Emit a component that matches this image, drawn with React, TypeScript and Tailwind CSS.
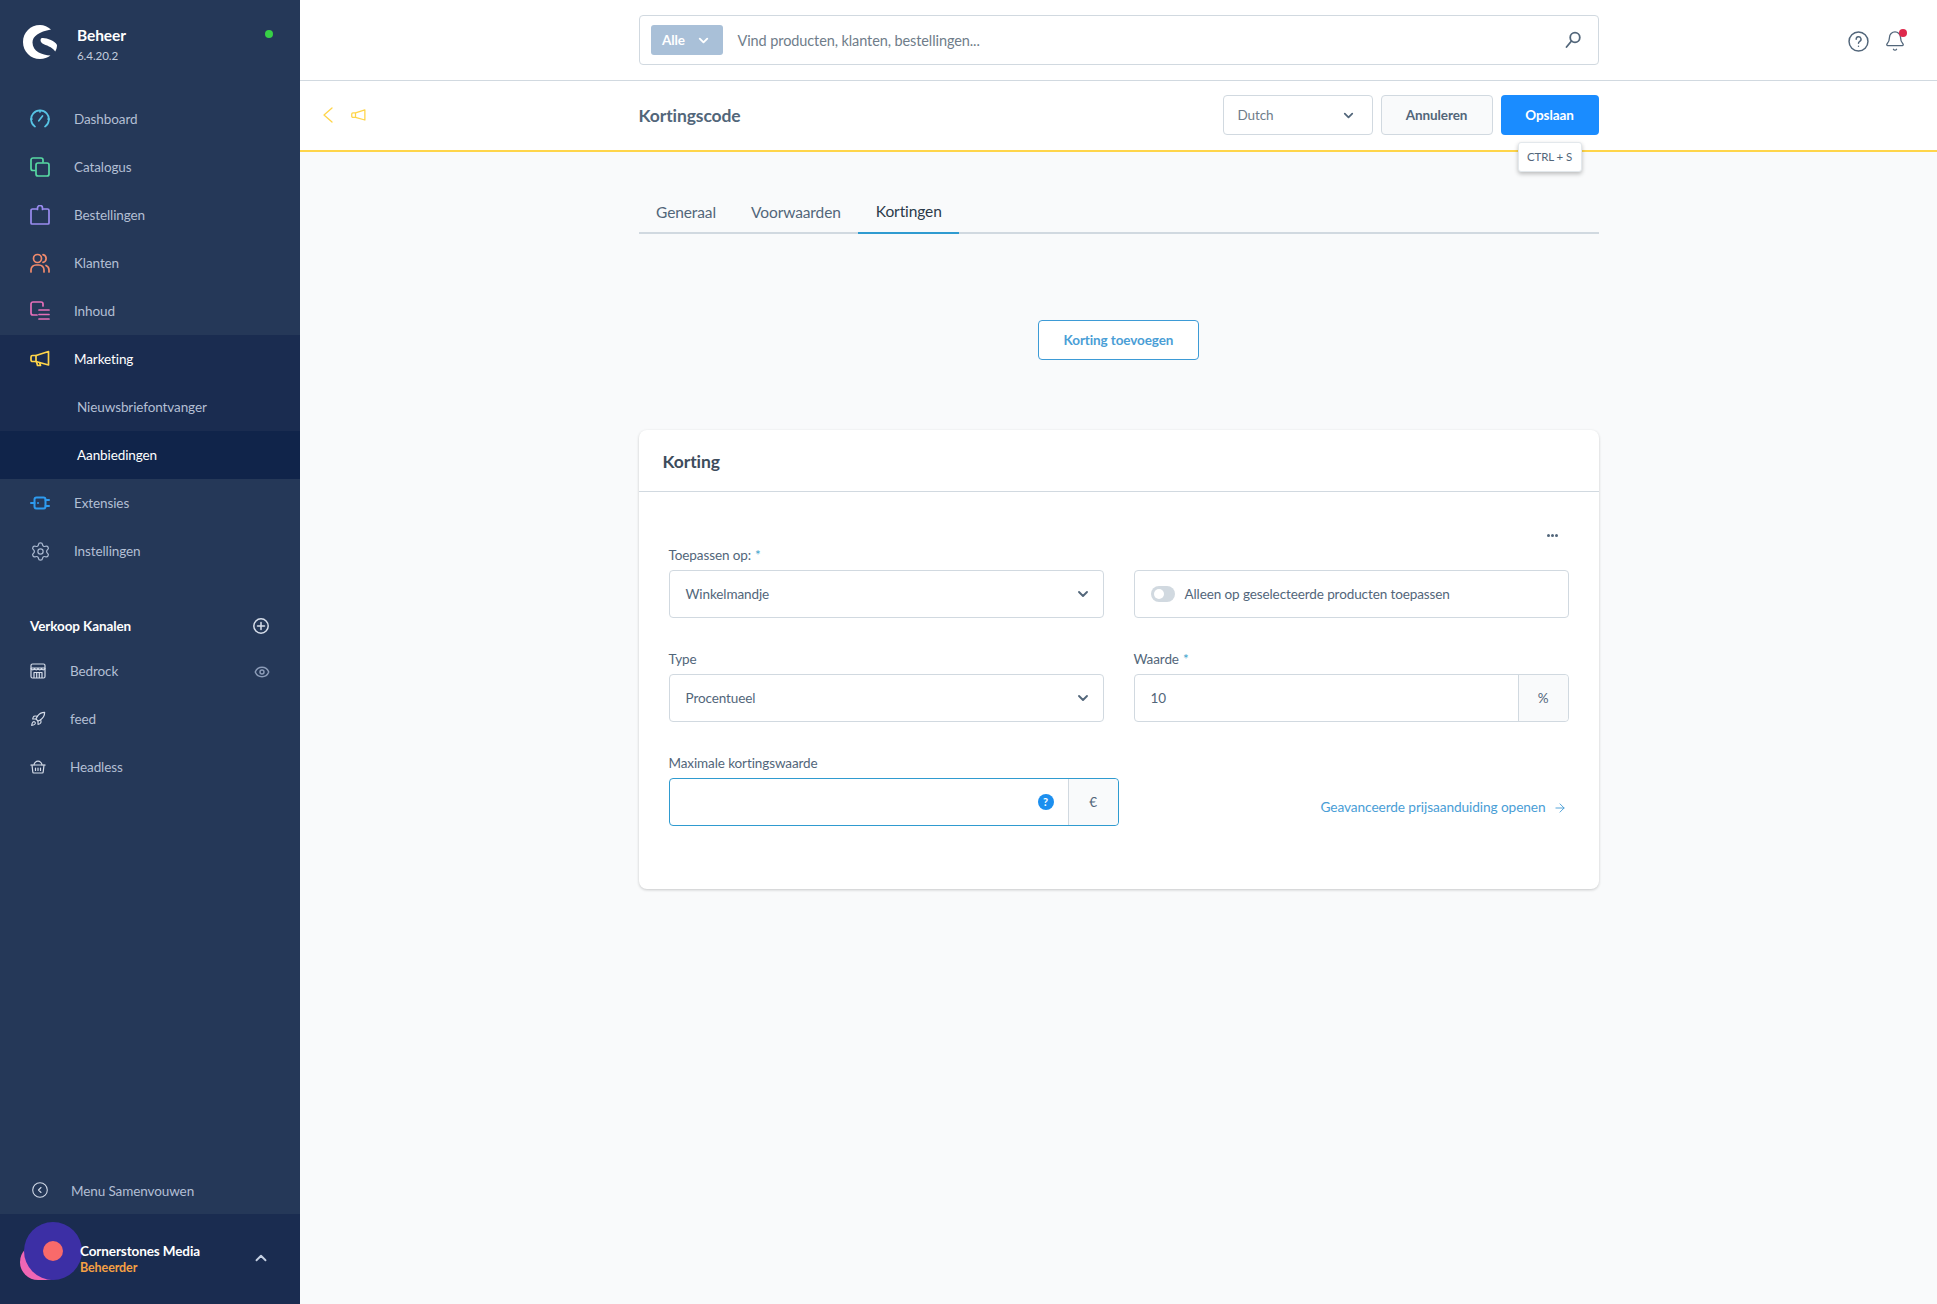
import { ChevronDown, ChevronUp, ArrowRight, Eye, Rocket, Settings, Bell } from 'lucide-react';
import type { ReactNode } from 'react';

function IconBox({ color, width = 1.7, children }: { color: string; width?: number; children: ReactNode }) {
  return (
    <svg viewBox="0 0 20 20" fill="none" stroke={color} strokeWidth={width} strokeLinecap="round" strokeLinejoin="round" className="w-5 h-5 shrink-0">
      {children}
    </svg>
  );
}

function Logo() {
  return (
    <svg viewBox="0 0 34 34" className="w-[34px] h-[34px] shrink-0" fill="#fff">
      <path d="M28 4.500C25 1.800 21 0 17 0 7.500 0 0 7.500 0 17s7.500 17 17 17c4 0 7.500-1.200 10.500-3.500C19 30 9.500 26.500 9.500 17.500 9.500 11 16 6.800 28 4.500z" />
      <path d="M19 13c4-.5 13 2.500 15 7 0 2.500-.6 4.500-1.800 6.500C29 21.500 23 20.500 19.500 18.500 17 17 17 13.500 19 13z" />
    </svg>
  );
}

const mainNav = [
  {
    label: 'Dashboard',
    icon: (
      <IconBox color="#57c4e5">
        <path d="M5 17.600A8.900 8.900 0 1 1 15 17.600" />
        <path d="M8.800 11.800 12.500 7" />
        <path d="M10 1.500v1.500M2 10H.9M19.100 10H18" />
      </IconBox>
    ),
  },
  {
    label: 'Catalogus',
    icon: (
      <IconBox color="#57d9a3">
        <path d="M5 13.500H3a2 2 0 0 1-2-2V3a2 2 0 0 1 2-2h8a2 2 0 0 1 2 2v2" />
        <rect x="6" y="6" width="13" height="13" rx="2" />
      </IconBox>
    ),
  },
  {
    label: 'Bestellingen',
    icon: (
      <IconBox color="#9a8cf0">
        <path d="M6.500 4H2.500A1.500 1.500 0 0 0 1 5.500V18a1 1 0 0 0 1 1h16a1 1 0 0 0 1-1V5.500A1.500 1.500 0 0 0 17.500 4H13.500" />
        <path d="M7.500 4.500V3a2.500 2.500 0 0 1 5 0v1.500" />
      </IconBox>
    ),
  },
  {
    label: 'Klanten',
    icon: (
      <IconBox color="#f08a6c">
        <circle cx="7.500" cy="5.500" r="4" />
        <path d="M1 19v-2a5 5 0 0 1 5-5h3a5 5 0 0 1 5 5v2" />
        <path d="M13 1.600a4 4 0 0 1 0 7.800M16 12.500a5 5 0 0 1 3 4.500v2" />
      </IconBox>
    ),
  },
  {
    label: 'Inhoud',
    icon: (
      <IconBox color="#e56fb8">
        <path d="M7 14H3a2 2 0 0 1-2-2V3a2 2 0 0 1 2-2h8a2 2 0 0 1 2 2v2" />
        <path d="M9 9h10M9 13.500h10M9 18h10" />
      </IconBox>
    ),
  },
];

const lowerNav = [
  {
    label: 'Extensies',
    icon: (
      <IconBox color="#2e9bf0" width={2}>
        <rect x="4.500" y="4.500" width="11" height="11" rx="2" />
        <path d="M1 10h3.500M15.500 7H19M15.500 13H19M8 10v.01" />
      </IconBox>
    ),
  },
  {
    label: 'Instellingen',
    icon: <Settings size={21} strokeWidth={1.4} className="text-[#a9b8d0] shrink-0" />,
  },
];

function NavItem({ icon, label, active }: { icon: ReactNode; label: string; active?: boolean }) {
  return (
    <div className="h-12 flex items-center pl-[30px]">
      <span className="w-[44px] flex items-center">{icon}</span>
      <span className={`text-[13.5px] ${active ? 'text-white' : 'text-[#b3bfd4]'}`}>{label}</span>
    </div>
  );
}

function ChannelItem({ icon, label, trailing }: { icon: ReactNode; label: string; trailing?: ReactNode }) {
  return (
    <div className="h-12 flex items-center pl-[30px] pr-[30px]">
      <span className="w-[40px] flex items-center text-[#d4dbe8]">{icon}</span>
      <span className="text-[13.5px] text-[#b3bfd4] flex-1">{label}</span>
      {trailing}
    </div>
  );
}

function StoreIcon() {
  return (
    <svg viewBox="0 0 16 16" fill="none" stroke="currentColor" strokeWidth="1.200" strokeLinejoin="round" className="w-4 h-4">
      <rect x="1" y="1" width="14" height="14" rx="1.500" />
      <path d="M1 5h14M1 5c0 2.400 3.500 2.400 3.500 0 0 2.400 3.500 2.400 3.500 0 0 2.400 3.500 2.400 3.500 0 0 2.400 3.500 2.400 3.500 0" />
      <path d="M4 15V9.500h8V15M6.700 9.500V15M9.300 9.500V15" />
    </svg>
  );
}

function BasketIcon() {
  return (
    <svg viewBox="0 0 16 16" fill="none" stroke="currentColor" strokeWidth="1.200" strokeLinecap="round" strokeLinejoin="round" className="w-4 h-4">
      <path d="M.8 6h14.400" />
      <path d="M2 6l.8 7a1 1 0 0 0 1 1h8.400a1 1 0 0 0 1-1L14 6" />
      <path d="M5.500 9v2.500M8 9v2.500M10.500 9v2.500" />
      <path d="M4 6c0-2 2-3.800 4-3.800S12 4 12 6" />
    </svg>
  );
}

function Sidebar() {
  return (
    <aside className="w-[300px] h-full shrink-0 flex flex-col bg-[#253858]">
      <div className="h-[95px] pl-[23px] pr-[27px] pt-[25px] flex items-start">
        <Logo />
        <div className="ml-5 flex-1 -mt-[1px]">
          <div className="text-[15.5px] leading-[22px] font-bold text-white">Beheer</div>
          <div className="text-[11.6px] leading-[14px] text-[#c3cddd] mt-[3px]">6.4.20.2</div>
        </div>
        <span className="w-2 h-2 rounded-full bg-[#37d046] mt-[5px]" />
      </div>
      {mainNav.map((item) => (
        <NavItem key={item.label} icon={item.icon} label={item.label} />
      ))}
      <div className="bg-[#1a2c50]">
        <NavItem
          active
          label="Marketing"
          icon={
            <IconBox color="#ffd54a">
              <path d="M18.500 2.500 6 6.500H2.500A1.500 1.500 0 0 0 1 8v3a1.500 1.500 0 0 0 1.500 1.500H6l12.500 3.500z" />
              <path d="M6 6.500v6M6.500 12.800l1 3.700h3l-.8-2.800" />
            </IconBox>
          }
        />
        <div className="h-12 flex items-center pl-[77px] text-[13.5px] text-[#b3bfd4]">Nieuwsbriefontvanger</div>
        <div className="h-12 flex items-center pl-[77px] text-[13.5px] text-white bg-[#10244a]">Aanbiedingen</div>
      </div>
      {lowerNav.map((item) => (
        <NavItem key={item.label} icon={item.icon} label={item.label} />
      ))}
      <div className="mt-[37px] h-7 flex items-center justify-between pl-[30px] pr-[31px]">
        <span className="text-[13.5px] font-bold text-white">Verkoop Kanalen</span>
        <svg viewBox="0 0 16 16" fill="none" stroke="#d7deea" strokeWidth="1.500" strokeLinecap="round" className="w-4 h-4">
          <circle cx="8" cy="8" r="7.200" />
          <path d="M8 4.500v7M4.500 8h7" />
        </svg>
      </div>
      <div className="mt-[7px]">
        <ChannelItem
          label="Bedrock"
          icon={<StoreIcon />}
          trailing={<Eye size={16} strokeWidth={2.200} className="text-[#8c9cb8] mt-[2px]" />}
        />
        <ChannelItem label="feed" icon={<Rocket size={16} strokeWidth={1.700} />} />
        <ChannelItem label="Headless" icon={<BasketIcon />} />
      </div>
      <div className="mt-auto h-12 flex items-center pl-[32px]">
        <svg viewBox="0 0 16 16" fill="none" stroke="#d0d8e6" strokeWidth="1.100" strokeLinecap="round" strokeLinejoin="round" className="w-4 h-4 mr-[23px]">
          <circle cx="8" cy="8" r="7.300" />
          <path d="M9 5.500 6.500 8 9 10.500" />
        </svg>
        <span className="text-[13.5px] mt-[3px] text-[#b3bfd4]">Menu Samenvouwen</span>
      </div>
      <div className="h-[90px] bg-[#1a2c50] flex items-center pr-[30px] relative">
        <span className="absolute left-[20px] top-[30px] w-[44px] h-[36px] rounded-full bg-[#f066b5]" />
        <span className="absolute left-[24px] top-[8px] w-[58px] h-[58px] rounded-full bg-[#3c2fa5] flex items-center justify-center">
          <span className="w-5 h-5 rounded-full bg-[#f96a6a]" />
        </span>
        <div className="pl-[80px] flex-1 relative">
          <div className="text-[13.5px] leading-[18px] font-bold text-white">Cornerstones Media</div>
          <div className="text-[12.5px] leading-[16px] font-bold text-[#f5a044]">Beheerder</div>
        </div>
        <ChevronUp size={18} strokeWidth={2.500} className="text-[#c5d0e2] -mt-[2px]" />
      </div>
    </aside>
  );
}

function TopBar() {
  return (
    <header className="h-[81px] shrink-0 bg-white border-b border-[#d1d9e0] flex items-start relative">
      <div className="w-[960px] mx-auto mt-[15px] h-[50px] border border-[#d1d9e0] rounded-[4px] flex items-center pl-[11px] pr-[16px]">
        <span className="w-[72px] h-[30px] rounded-[3px] bg-[#a9c0d8] flex items-center justify-center gap-[11px] text-[13.5px] font-bold text-white">
          Alle
          <ChevronDown size={15} strokeWidth={3} />
        </span>
        <span className="ml-[15px] mt-[2px] flex-1 text-[14.5px] text-[#6f7d8a]">Vind producten, klanten, bestellingen...</span>
        <svg viewBox="0 0 18 18" fill="none" stroke="#52667a" strokeWidth="1.800" strokeLinecap="round" className="w-[18px] h-[18px]">
          <circle cx="11" cy="6.500" r="4.800" />
          <path d="M7.500 10 2.500 16" />
        </svg>
      </div>
      <div className="absolute right-[31px] top-[30px] flex items-center gap-[15px]">
        <svg viewBox="0 0 20 20" fill="none" stroke="#52667a" strokeWidth="1.400" className="w-[21px] h-[21px]">
          <circle cx="10" cy="10" r="9" />
          <path d="M7.800 7.800a2.300 2.300 0 1 1 3.400 2c-.8.500-1.200.9-1.200 1.800M10 14.500v.01" strokeLinecap="round" />
        </svg>
        <span className="relative">
          <Bell size={22} strokeWidth={1.400} className="text-[#52667a]" />
          <span className="absolute -top-[1px] -right-[1px] w-2 h-2 rounded-full bg-[#de294c]" />
        </span>
      </div>
    </header>
  );
}

function SmartBar() {
  return (
    <div className="h-[71px] shrink-0 bg-white border-b-2 border-[#ffd54a] flex items-center relative">
      <div className="absolute left-[23px] top-[26px] flex items-center gap-[18px]">
        <svg viewBox="0 0 10 16" fill="none" stroke="#ffd54a" strokeWidth="1.300" strokeLinecap="round" strokeLinejoin="round" className="w-[10px] h-4">
          <path d="M9 1 1 8l8 7" />
        </svg>
        <svg viewBox="0 0 20 20" fill="none" stroke="#ffd54a" strokeWidth="1.700" strokeLinejoin="round" className="w-[15px] h-[15px]">
          <path d="M18.500 2.500 6 6.500H2.500A1.500 1.500 0 0 0 1 8v3a1.500 1.500 0 0 0 1.500 1.500H6l12.500 3.500z" />
          <path d="M6 6.500v6" />
        </svg>
      </div>
      <div className="w-[960px] mx-auto flex items-center -mt-[1px]">
        <h1 className="flex-1 mt-[2px] text-[17.5px] font-bold text-[#52667a]">Kortingscode</h1>
        <div className="w-[150px] h-10 border border-[#d1d9e0] rounded-[4px] bg-white flex items-center justify-between pl-[14px] pr-[16px] text-[13.5px] text-[#6f7d8a]">
          Dutch
          <ChevronDown size={15} strokeWidth={2.800} className="text-[#52667a]" />
        </div>
        <button className="ml-[8px] w-[112px] h-10 border border-[#d1d9e0] rounded-[4px] bg-[#f9fafb] text-[13.5px] font-bold text-[#52667a]">Annuleren</button>
        <button className="ml-[8px] w-[98px] h-10 rounded-[4px] bg-[#1a8cff] text-[13.5px] font-bold text-white relative">
          Opslaan
          <span className="absolute left-[17px] top-[47px] w-[64px] h-[30px] rounded-[3px] border border-[#e3e8ec] bg-white shadow-[0_2px_4px_rgba(0,0,0,0.25)] flex items-center justify-center text-[11.5px] font-normal text-[#52667a]">CTRL + S</span>
        </button>
      </div>
    </div>
  );
}

function Tabs() {
  const tabs = ['Generaal', 'Voorwaarden', 'Kortingen'];
  return (
    <div className="flex border-b-2 border-[#d1d9e0] h-[52px]">
      {tabs.map((t) => (
        <div
          key={t}
          className={`px-[17.5px] pt-[10px] h-[52px] flex items-center text-[15.5px] ${t === 'Kortingen' ? 'text-[#2b3a4a] border-b-2 border-[#2f9bd0]' : 'text-[#52667a]'}`}
        >
          {t}
        </div>
      ))}
    </div>
  );
}

function Label({ text, required }: { text: string; required?: boolean }) {
  return (
    <div className="h-[20px] mb-[5px] text-[13.5px] leading-[20px] text-[#52667a]">
      {text}
      {required && <span className="text-[#37a1cc] ml-1">*</span>}
    </div>
  );
}

function SelectField({ value }: { value: string }) {
  return (
    <div className="h-12 border border-[#d1d9e0] rounded-[4px] bg-white flex items-center justify-between pl-4 pr-[12px] text-[13.5px] text-[#52667a]">
      {value}
      <ChevronDown size={16} strokeWidth={2.800} className="text-[#52667a]" />
    </div>
  );
}

function Card() {
  return (
    <section className="mt-[70px] h-[459px] bg-white rounded-[8px] shadow-[0_1px_3px_rgba(0,0,0,0.2)]">
      <div className="h-[62px] border-b border-[#d1d9e0] flex items-center pl-6 pt-[3px] text-[17.5px] font-bold text-[#3d4c5c]">Korting</div>
      <div className="px-[30px] relative">
        <div className="absolute right-[41px] top-[42px] flex gap-[1px]">
          <span className="w-[3px] h-[3px] rounded-full bg-[#52667a]" />
          <span className="w-[3px] h-[3px] rounded-full bg-[#52667a]" />
          <span className="w-[3px] h-[3px] rounded-full bg-[#52667a]" />
        </div>
        <div className="pt-[53px] grid grid-cols-2 gap-x-[30px] gap-y-[31px]">
          <div>
            <Label text="Toepassen op:" required />
            <SelectField value="Winkelmandje" />
          </div>
          <div className="pt-[25px]">
            <div className="h-12 border border-[#d1d9e0] rounded-[4px] flex items-center pl-4 text-[13.5px] text-[#52667a]">
              <span className="w-6 h-4 rounded-full bg-[#d1d9e0] flex items-center pl-[3px] mr-[10px]">
                <span className="w-[10px] h-[10px] rounded-full bg-white" />
              </span>
              Alleen op geselecteerde producten toepassen
            </div>
          </div>
          <div>
            <Label text="Type" />
            <SelectField value="Procentueel" />
          </div>
          <div>
            <Label text="Waarde" required />
            <div className="h-12 border border-[#d1d9e0] rounded-[4px] flex items-center text-[13.5px] text-[#52667a]">
              <span className="flex-1 pl-4">10</span>
              <span className="w-[50px] h-full bg-[#f9fafb] border-l border-[#d1d9e0] rounded-r-[4px] flex items-center justify-center">%</span>
            </div>
          </div>
          <div>
            <Label text="Maximale kortingswaarde" />
            <div className="w-[450px] h-12 border border-[#2f9bd0] rounded-[4px] flex items-center text-[13.5px] text-[#52667a]">
              <span className="flex-1 flex justify-end pr-[14px]">
                <span className="w-4 h-4 rounded-full bg-[#1c8fef] text-white text-[11px] font-bold flex items-center justify-center">?</span>
              </span>
              <span className="w-[50px] h-full bg-[#f9fafb] border-l border-[#d1d9e0] rounded-r-[4px] flex items-center justify-center">€</span>
            </div>
          </div>
          <div className="flex items-center justify-end pr-[2px] pt-[36px] text-[13.7px] text-[#4a9ed6]">
            Geavanceerde prijsaanduiding openen
            <ArrowRight size={14} strokeWidth={1.600} className="ml-[7px]" />
          </div>
        </div>
      </div>
    </section>
  );
}

export default function App() {
  return (
    <div className="w-full h-[1304px] overflow-hidden flex tracking-[-0.1px] font-['Lato','Liberation_Sans',sans-serif] bg-[#f9fafb]">
      <Sidebar />
      <main className="flex-1 flex flex-col min-w-0">
        <TopBar />
        <SmartBar />
        <div className="w-[960px] mx-auto">
          <div className="mt-[30px]">
            <Tabs />
          </div>
          <div className="mt-[86px] flex justify-center">
            <button className="w-[161px] h-10 border border-[#3d9bd6] rounded-[4px] bg-white text-[13.5px] font-bold text-[#4a9ed6]">Korting toevoegen</button>
          </div>
          <Card />
        </div>
      </main>
    </div>
  );
}
